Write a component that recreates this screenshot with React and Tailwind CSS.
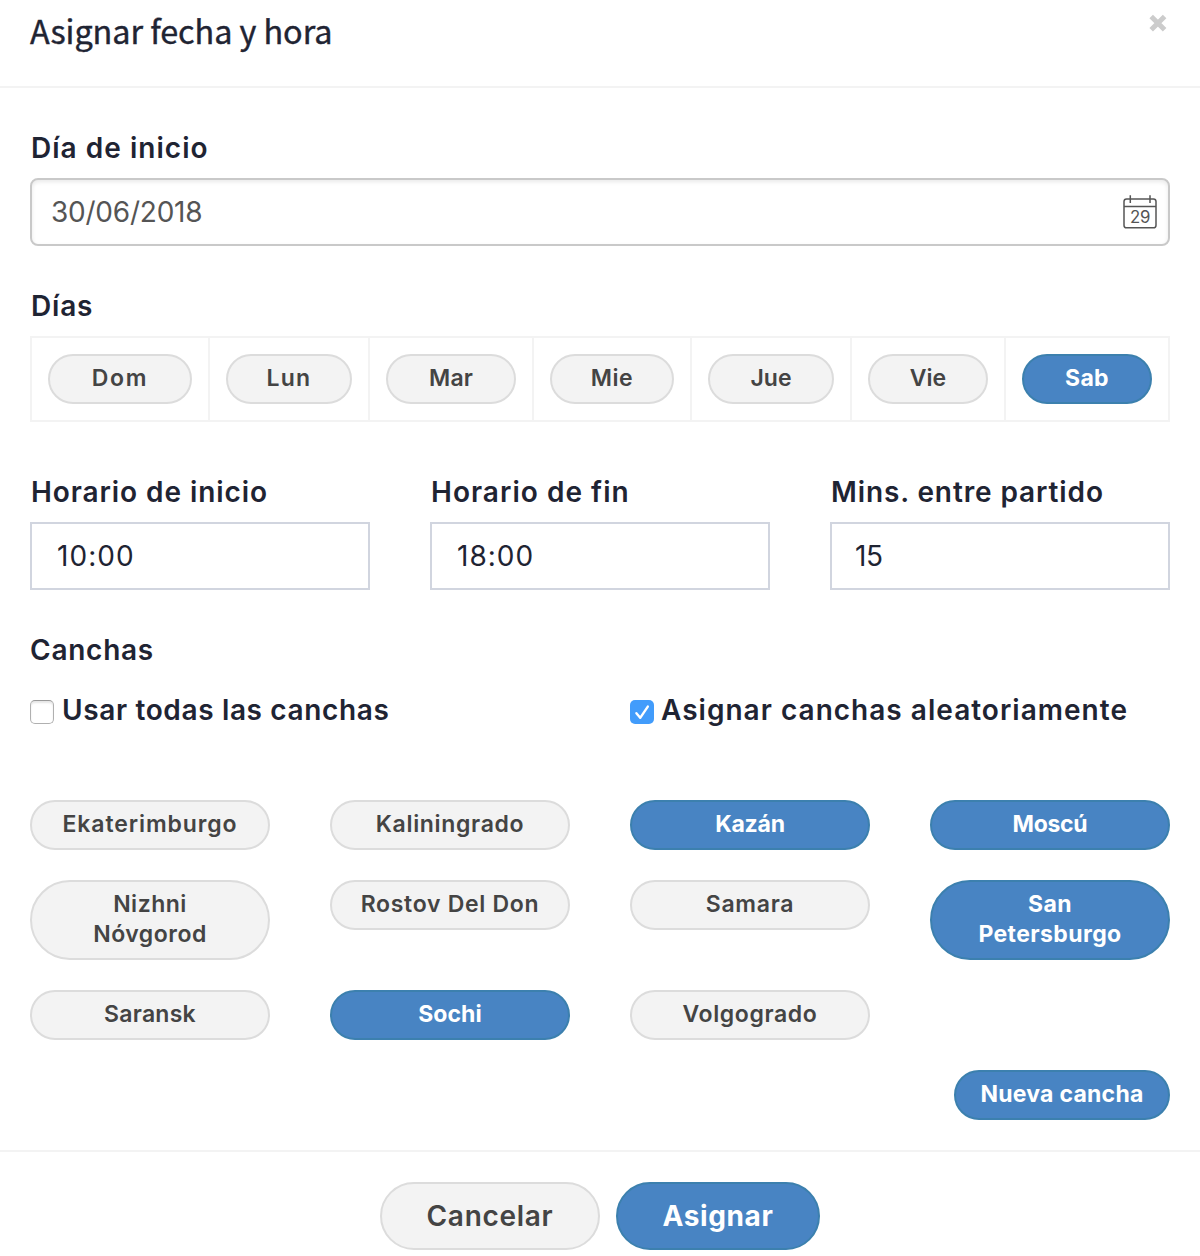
import React from "react";

const days = [
  { name: "Dom", size: "w-[144px]", track: "tracking-[1.7px]" },
  { name: "Lun", size: "w-[126px]", track: "tracking-[1.2px]" },
  { name: "Mar", size: "w-[130px]", track: "tracking-[0.1px]" },
  { name: "Mie", size: "w-[124px]", track: "tracking-[0.6px]" },
  { name: "Jue", size: "w-[126px]", track: "tracking-normal" },
  { name: "Vie", size: "w-[120px]", track: "tracking-normal" },
  { name: "Sab", size: "w-[130px]", track: "tracking-[0.3px]", active: true },
];

const courts = [
  { name: "Ekaterimburgo", track: "tracking-[0.9px]" },
  { name: "Kaliningrado", track: "tracking-[0.68px]" },
  { name: "Kazán", track: "tracking-[-0.2px]", active: true },
  { name: "Moscú", track: "tracking-[-0.3px]", active: true },
  { name: "Nizhni Nóvgorod", track: "tracking-[0.5px]" },
  { name: "Rostov Del Don", track: "tracking-[0.7px]" },
  { name: "Samara", track: "tracking-[0.7px]" },
  { name: "San Petersburgo", track: "tracking-[0.4px]", active: true },
  { name: "Saransk", track: "tracking-[0.25px]" },
  { name: "Sochi", track: "tracking-[0.07px]", active: true },
  { name: "Volgogrado", track: "tracking-[0.63px]" },
];

const times = [
  { label: "Horario de inicio", track: "tracking-[0.92px]", value: "10:00", field: "pl-[25px] tracking-[1.05px]" },
  { label: "Horario de fin", track: "tracking-[1.03px]", value: "18:00", field: "pl-[25px] tracking-[1px]" },
  { label: "Mins. entre partido", track: "tracking-[0.89px]", value: "15", field: "pl-[23px] tracking-[-0.5px]" },
];

function Pill({ active, className, children }) {
  const tone = active
    ? "border-[#3c80ae] bg-[#4884c3] font-bold text-white"
    : "border-[#dcdcdc] bg-[#f3f3f3] font-semibold text-[#444]";
  return (
    <button className={`block rounded-full border-2 px-6 pt-[7px] pb-[9px] text-center text-[23px] leading-[30px] ${tone} ${className}`}>
      {children}
    </button>
  );
}

function Label({ className = "", children }) {
  return <div className={`text-[28px] leading-10 font-semibold whitespace-nowrap ${className}`}>{children}</div>;
}

function CalendarIcon() {
  return (
    <svg width="36" height="36" viewBox="0 0 36 36" fill="none" stroke="#555" strokeWidth="1.5">
      <rect x="2" y="5" width="32" height="28.8" rx="2.6" />
      <path d="M2 12.5H34M8.3 1.2V9M28 1.2V9" />
      <text x="18" y="28.7" textAnchor="middle" fontSize="16.8" fill="#555" stroke="none">29</text>
    </svg>
  );
}

export default function App() {
  return (
    <div className="h-[1256px] w-[1200px] overflow-hidden bg-white font-['Inter',sans-serif] text-[#1f2433]">
      <header className="flex h-[88px] items-start justify-between border-b-2 border-[#f3f3f3] pr-[32px] pl-[30px]">
        <h1 className="pt-1 font-['Noto_Sans_CJK_SC',sans-serif] text-[32.4px] leading-[52px] tracking-[-0.07px] [-webkit-text-stroke:0.4px_#1f2433]">
          Asignar fecha y hora
        </h1>
        <svg className="mt-[13px]" width="20" height="20" viewBox="0 0 20 20" stroke="#ccc" strokeWidth="5">
          <path d="M3.2 3.4L16.6 16.8M16.6 3.4L3.2 16.8" />
        </svg>
      </header>

      <main className="h-[1064px] border-b-2 border-[#f3f3f3] px-[30px] pt-10">
        <Label className="pl-px tracking-[1.03px]">Día de inicio</Label>
        <div className="mt-[10px] flex h-[68px] items-center justify-between rounded-lg border-2 border-[#c9c9c9] pr-[10px] pl-[19px] text-[28px] tracking-[-0.23px] text-[#555] shadow-[inset_0_2px_4px_rgba(0,0,0,0.09)]">
          <span className="leading-10">30/06/2018</span>
          <CalendarIcon />
        </div>

        <Label className="mt-10 pl-px tracking-[0.8px]">Días</Label>
        <div className="mt-[10px] flex w-[1140px] border-y-2 border-l-2 border-[#f3f3f3]">
          {days.map((d) => (
            <div key={d.name} className="border-r-2 border-[#f3f3f3] p-4">
              <Pill active={d.active} className={`${d.size} ${d.track}`}>{d.name}</Pill>
            </div>
          ))}
        </div>

        <div className="mt-[50px] grid grid-cols-3 gap-[60px]">
          {times.map((t) => (
            <div key={t.label}>
              <Label className={`pl-px ${t.track}`}>{t.label}</Label>
              <div className={`mt-[10px] flex h-[68px] items-center border-2 border-[#d1d5df] text-[28px] leading-10 ${t.field}`}>
                {t.value}
              </div>
            </div>
          ))}
        </div>

        <Label className="mt-10 tracking-[0.75px]">Canchas</Label>
        <div className="mt-5 grid grid-cols-2 gap-[60px]">
          <label className="flex items-start gap-2">
            <span className="mt-[10px] h-6 w-6 shrink-0 rounded-[5px] border border-[#b0b0b0] border-t-[#999] bg-white shadow-[inset_0_2px_2px_rgba(0,0,0,0.1)]" />
            <Label className="tracking-[0.64px]">Usar todas las canchas</Label>
          </label>
          <label className="flex items-start gap-2">
            <span className="mt-[10px] h-6 w-6 shrink-0 rounded-[5px] bg-[#429cfb]">
              <svg width="24" height="24" viewBox="0 0 24 24" fill="none" stroke="#fff" strokeWidth="2.4" strokeLinecap="round" strokeLinejoin="round">
                <path d="M6.4 13.2L10.2 17.8L17.8 6.6" />
              </svg>
            </span>
            <Label className="-ml-px tracking-[1.02px]">Asignar canchas aleatoriamente</Label>
          </label>
        </div>

        <div className="mt-[70px] grid grid-cols-4 items-start gap-x-[60px] gap-y-[30px]">
          {courts.map((c) => (
            <Pill key={c.name} active={c.active} className={`w-full ${c.track}`}>{c.name}</Pill>
          ))}
        </div>

        <div className="mt-[30px] flex justify-end">
          <Pill active className="w-[216px] whitespace-nowrap tracking-[0.25px]">Nueva cancha</Pill>
        </div>
      </main>

      <footer className="flex justify-center gap-4 pt-[30px]">
        <button className="h-[68px] w-[220px] rounded-full border-2 border-[#dcdcdc] bg-[#f3f3f3] text-[28px] leading-10 font-semibold tracking-[0.71px] text-[#444]">
          Cancelar
        </button>
        <button className="h-[68px] w-[204px] rounded-full border-2 border-[#3c80ae] bg-[#4884c3] text-[28px] leading-10 font-bold tracking-[0.65px] text-white">
          Asignar
        </button>
      </footer>
    </div>
  );
}
